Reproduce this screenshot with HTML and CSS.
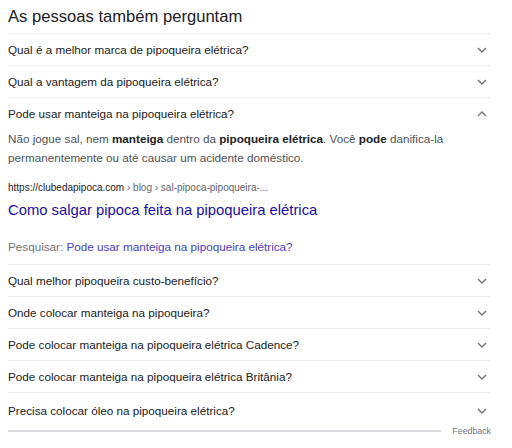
FILE: index.html
```html
<!DOCTYPE html>
<html lang="pt-BR">
<head>
    <meta charset="UTF-8">
    <title>As pessoas também perguntam</title>
    <link rel="stylesheet" href="styles.css">
</head>
<body>

    <div class="paa">
        <h2 class="paa-title">As pessoas também perguntam</h2>

        <div class="question">
            <span>Qual é a melhor marca de pipoqueira elétrica?</span>
            <svg class="chevron" viewBox="0 0 10 6"><path d="M1 1l4 4 4-4"/></svg>
        </div>
        <div class="question">
            <span>Qual a vantagem da pipoqueira elétrica?</span>
            <svg class="chevron" viewBox="0 0 10 6"><path d="M1 1l4 4 4-4"/></svg>
        </div>

        <div class="question-open">
            <div class="question-head">
                <span>Pode usar manteiga na pipoqueira elétrica?</span>
                <svg class="chevron" viewBox="0 0 10 6"><path d="M1 5l4-4 4 4"/></svg>
            </div>
            <p class="answer">Não jogue sal, nem <b>manteiga</b> dentro da <b>pipoqueira elétrica</b>. Você <b>pode</b> danifica-la permanentemente ou até causar um acidente doméstico.</p>
            <div class="source-url">https://clubedapipoca.com <span class="crumbs">› blog › sal-pipoca-pipoqueira-...</span></div>
            <a class="source-title" href="#">Como salgar pipoca feita na pipoqueira elétrica</a>
            <div class="search-for">Pesquisar: <a href="#">Pode usar manteiga na pipoqueira elétrica?</a></div>
        </div>

        <div class="question">
            <span>Qual melhor pipoqueira custo-benefício?</span>
            <svg class="chevron" viewBox="0 0 10 6"><path d="M1 1l4 4 4-4"/></svg>
        </div>
        <div class="question">
            <span>Onde colocar manteiga na pipoqueira?</span>
            <svg class="chevron" viewBox="0 0 10 6"><path d="M1 1l4 4 4-4"/></svg>
        </div>
        <div class="question">
            <span>Pode colocar manteiga na pipoqueira elétrica Cadence?</span>
            <svg class="chevron" viewBox="0 0 10 6"><path d="M1 1l4 4 4-4"/></svg>
        </div>
        <div class="question">
            <span>Pode colocar manteiga na pipoqueira elétrica Britânia?</span>
            <svg class="chevron" viewBox="0 0 10 6"><path d="M1 1l4 4 4-4"/></svg>
        </div>
        <div class="question question-last">
            <span>Precisa colocar óleo na pipoqueira elétrica?</span>
            <svg class="chevron" viewBox="0 0 10 6"><path d="M1 1l4 4 4-4"/></svg>
        </div>

        <div class="footer">
            <div class="footer-line"></div>
            <span class="feedback">Feedback</span>
        </div>
    </div>

</body>
</html>
```

FILE: styles.css
```css
* {
    margin: 0;
    padding: 0;
    box-sizing: border-box;
}

body {
    font-family: 'Liberation Sans', Arial, sans-serif;
    background-color: #fff;
    color: #202124;
    padding: 0 21px 0 8px;
}

.paa {
    width: 483px;
}

.paa-title {
    font-size: 16.6px;
    font-weight: normal;
    line-height: 33px;
    height: 33px;
    color: #202124;
}

.question,
.question-head {
    display: flex;
    align-items: center;
    justify-content: space-between;
    height: 32px;
    border-top: 1px solid #ebebeb;
    font-size: 11.7px;
}

.question-head {
    height: 31px;
}

.question-last {
    height: 36px;
}

.chevron {
    width: 10px;
    height: 6px;
    margin-right: 4px;
    fill: none;
    stroke: #70757a;
    stroke-width: 1.4;
}

.question-open {
    border-top: 1px solid #ebebeb;
    padding-bottom: 8px;
}

.question-open .question-head {
    border-top: none;
}

.answer {
    font-size: 11.7px;
    line-height: 19px;
    color: #4d5156;
}

.answer b {
    color: #202124;
}

.source-url {
    margin-top: 14px;
    font-size: 10px;
    line-height: 14px;
    color: #202124;
}

.crumbs {
    color: #5f6368;
}

.source-title {
    display: block;
    margin-top: 5px;
    font-size: 14.8px;
    line-height: 20px;
    color: #1a0dab;
    text-decoration: none;
}

.search-for {
    margin-top: 17px;
    font-size: 11.7px;
    line-height: 19px;
    color: #70757a;
}

.search-for a {
    color: #4a3dc8;
    text-decoration: none;
}

.footer {
    display: flex;
    align-items: center;
    gap: 11px;
    height: 6px;
}

.footer-line {
    flex: 1;
    border-top: 2px solid #dadce0;
}

.feedback {
    font-size: 8.8px;
    color: #70757a;
}
```
